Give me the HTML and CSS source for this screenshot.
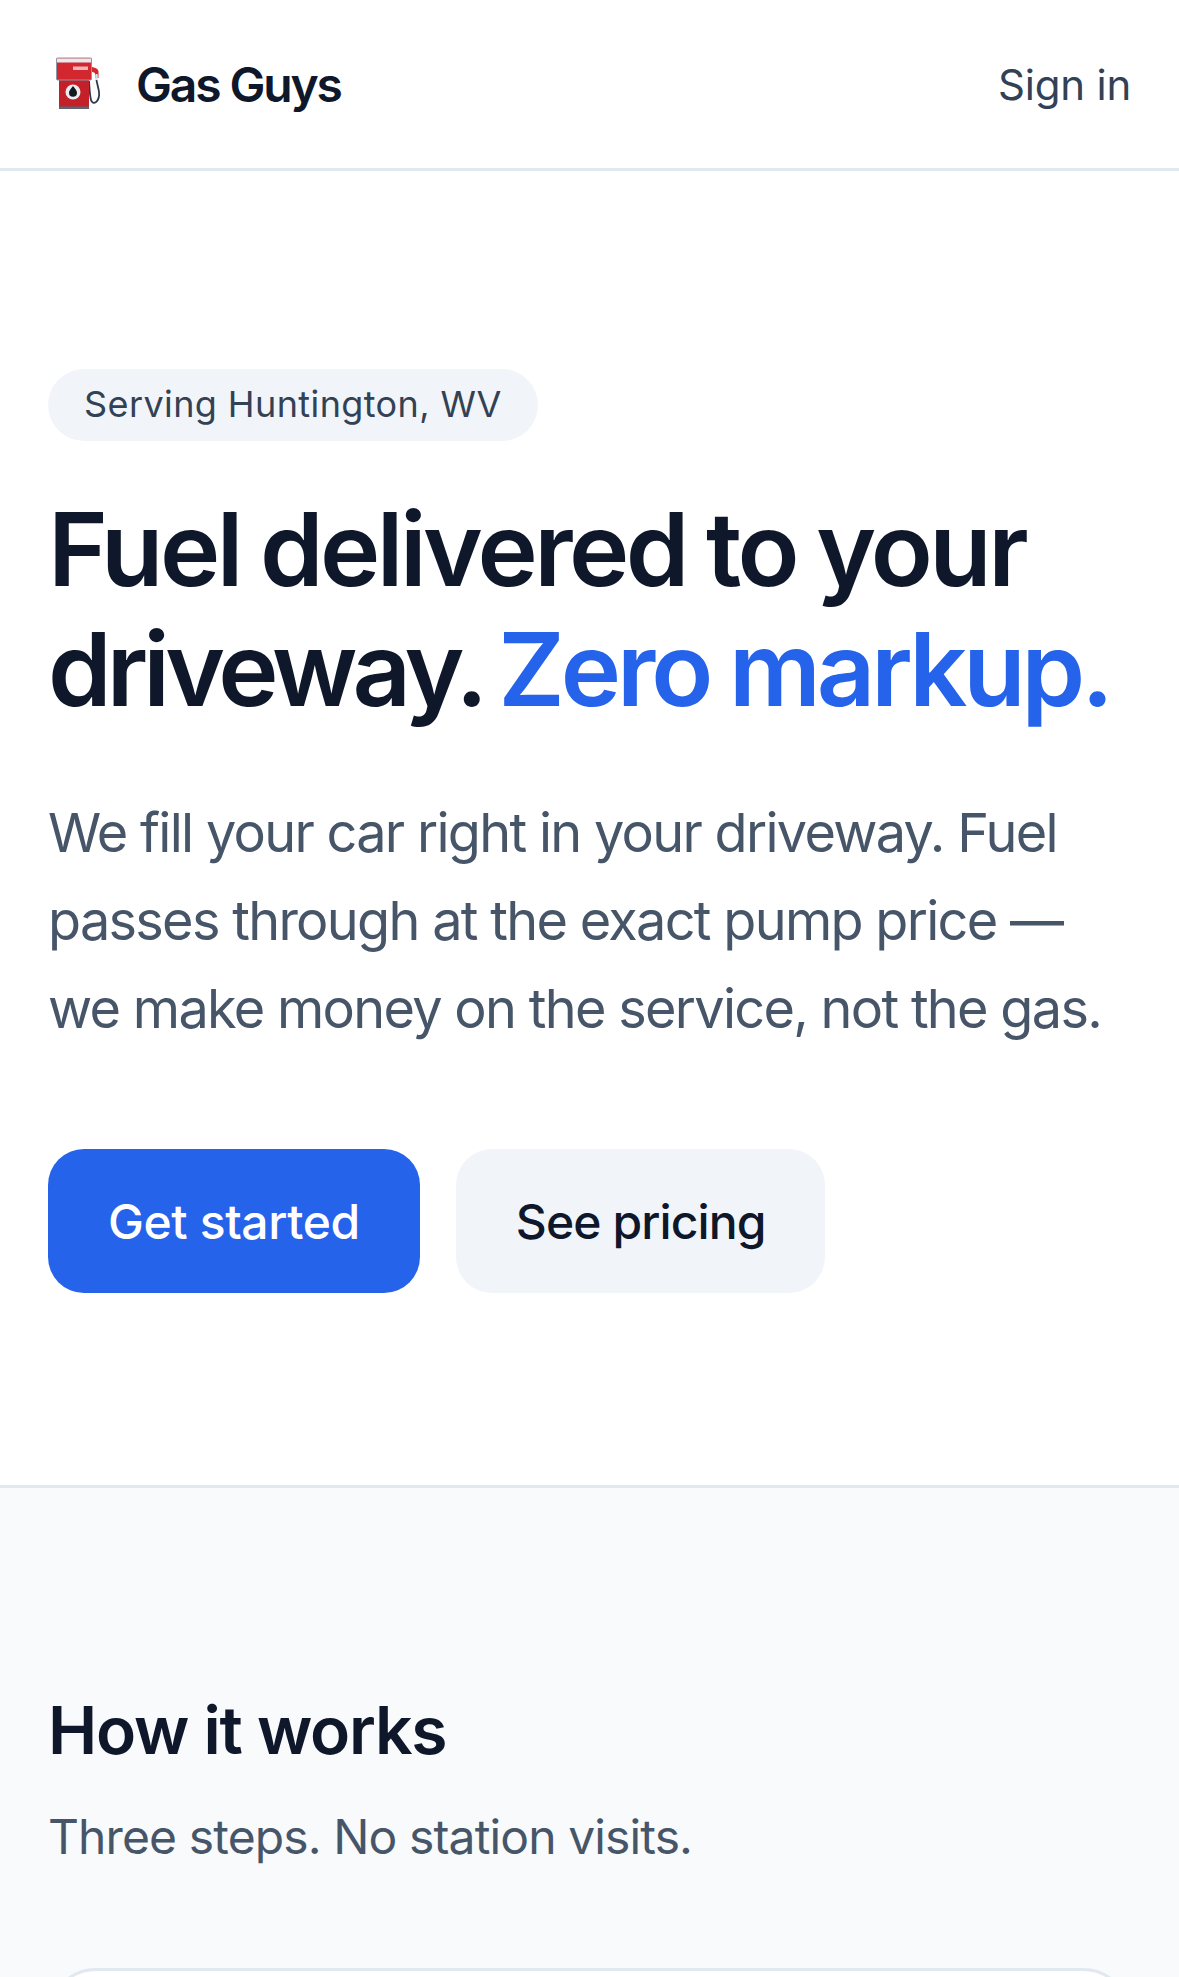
FILE: index.html
```html
<!DOCTYPE html>
<html lang="en">
<head>
<meta charset="utf-8">
<title>Gas Guys</title>
<link rel="stylesheet" href="styles.css">
</head>
<body>
<header class="nav">
  <a class="brand" href="#">
    <svg class="brand-icon" viewBox="0 0 45 52" aria-hidden="true">
      <path d="M33 24c.5 6 .5 13 2 19 .8 3 3 3.500 5 2 3-2.500 3.500-6 3-10-.4-4-2-8-2.500-12" fill="none" stroke="#2f3a4c" stroke-width="1.800"/>
      <path d="M35 9.500l5.500 2c1.500.7 2 2 2 3.500v6h-3.500v-5l-4-1.800z" fill="#d4262c"/>
      <rect x="39.200" y="17" width="2.600" height="6" rx="1" fill="#d8dee5"/>
      <rect x="3" y="23" width="30" height="28" fill="#c4202a"/>
      <rect x="3" y="49.500" width="30" height="2.500" fill="#5b6675"/>
      <rect x="0.500" y="1" width="35" height="22" rx="1" fill="#d3272f" stroke="#8d97a4" stroke-width="1"/>
      <rect x="1" y="1.500" width="34" height="4" fill="#e6e9ed"/>
      <rect x="17" y="9.500" width="15" height="3.500" fill="#efb5b8"/>
      <circle cx="17" cy="35" r="7.500" fill="#e9edf1"/>
      <path d="M17 29c2.300 2.900 4 4.700 4 6.700a4 4 0 0 1-8 0c0-2 1.700-3.800 4-6.700z" fill="#14181f"/>
    </svg>
    <span class="brand-name">Gas Guys</span>
  </a>
  <a class="signin" href="#">Sign in</a>
</header>
<main>
  <section class="hero">
    <span class="pill">Serving Huntington, WV</span>
    <h1 class="hero-title">Fuel delivered to your <span class="tight">driveway.</span> <span class="accent">Zero markup.</span></h1>
    <p class="hero-copy">We fill your car right in your driveway. Fuel passes through at the exact pump price — we make money on the service, not the gas.</p>
    <div class="actions">
      <a class="btn btn-primary" href="#">Get started</a>
      <a class="btn btn-secondary" href="#">See pricing</a>
    </div>
  </section>
  <section class="how">
    <h2 class="how-title">How it works</h2>
    <p class="how-copy">Three steps. No station visits.</p>
    <div class="card"></div>
  </section>
</main>
</body>
</html>
```
FILE: styles.css
```css
* { box-sizing: border-box; }
html, body { margin: 0; padding: 0; }
body {
  background: #fff;
  color: #0f172a;
  font-family: Inter, "Liberation Sans", sans-serif;
  height: 1977px;
  overflow: hidden;
}
a { text-decoration: none; color: inherit; }
.nav {
  display: flex;
  align-items: center;
  justify-content: space-between;
  height: 171px;
  padding: 0 48px;
  border-bottom: 3px solid #e2e8f0;
}
.brand { display: flex; align-items: center; gap: 35px; padding-left: 8px; }
.brand-icon { width: 45px; height: 52px; display: block; margin-top: -2px; }
.brand-name { font-size: 48px; font-weight: 600; letter-spacing: -2.15px; color: #0f172a; }
.signin { font-size: 42px; font-weight: 400; letter-spacing: -0.2px; color: #334155; }
.hero { padding: 198px 48px 192px; border-bottom: 3px solid #e2e8f0; }
.pill {
  display: inline-block;
  padding: 0 36px;
  height: 72px;
  line-height: 70px;
  border-radius: 36px;
  background: #f1f5f9;
  color: #334155;
  font-size: 36px;
  letter-spacing: 0.4px;
}
.hero-title {
  margin: 48px 0 0;
  font-size: 102px;
  line-height: 120px;
  font-weight: 630;
  letter-spacing: -3.55px;
  word-spacing: -2px;
  color: #0f172a;
}
.tight { letter-spacing: -4.9px; margin-right: -5px; }
.accent { color: #2563eb; letter-spacing: -4.07px; }
.hero-copy {
  margin: 60px 0 0;
  font-size: 54px;
  line-height: 88px;
  letter-spacing: -1.7px;
  color: #475569;
}
.actions { display: flex; gap: 36px; margin-top: 96px; }
.btn {
  display: flex;
  align-items: center;
  justify-content: center;
  height: 144px;
  padding: 0 60px;
  border-radius: 36px;
  font-size: 48px;
  font-weight: 500;
}
.btn-primary { background: #2563eb; color: #fff; letter-spacing: -0.38px; }
.btn-secondary { background: #f1f5f9; color: #0f172a; letter-spacing: -0.9px; }
.how { background: #f8fafc; padding: 200px 48px 0; height: 489px; overflow: hidden; }
.how-title {
  margin: 0;
  font-size: 66px;
  line-height: 84px;
  font-weight: 630;
  letter-spacing: -1.25px;
  color: #0f172a;
}
.how-copy { margin: 29px 0 0; font-size: 48px; line-height: 72px; letter-spacing: -0.88px; color: #475569; }
.card {
  margin-top: 95px;
  height: 300px;
  background: #fff;
  border: 3px solid #e2e8f0;
  border-radius: 48px;
}
```
